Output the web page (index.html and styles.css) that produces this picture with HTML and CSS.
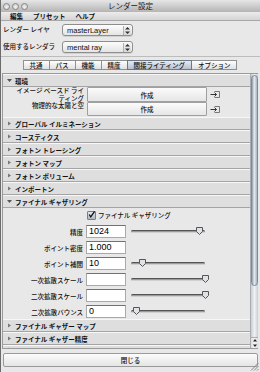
FILE: index.html
```html
<!DOCTYPE html>
<html lang="ja">
<head>
    <meta charset="UTF-8">
    <title>レンダー設定</title>
    <link rel="stylesheet" href="styles.css">
</head>
<body>
<div class="window">
    <div class="titlebar">
        <div class="lights"><span></span><span></span><span></span></div>
        <div class="title">レンダー設定</div>
        <div></div>
    </div>
    <div class="menubar"><span>編集</span><span>プリセット</span><span>ヘルプ</span></div>

    <div class="top">
        <div class="field">
            <label>レンダー レイヤ</label>
            <div class="select">masterLayer
                <svg class="stepper" width="7" height="9" viewBox="0 0 7 9"><path d="M3.5 1L6 3.5H1Z M3.5 8L6 5.5H1Z" fill="#333"/></svg>
            </div>
        </div>
        <div class="field">
            <label>使用するレンダラ</label>
            <div class="select">mental ray
                <svg class="stepper" width="7" height="9" viewBox="0 0 7 9"><path d="M3.5 1L6 3.5H1Z M3.5 8L6 5.5H1Z" fill="#333"/></svg>
            </div>
        </div>
    </div>

    <div class="tabs">
        <span class="tab">共通</span>
        <span class="tab">パス</span>
        <span class="tab">機能</span>
        <span class="tab">精度</span>
        <span class="tab active">間接ライティング</span>
        <span class="tab">オプション</span>
    </div>

    <div class="panel">
        <div class="scroll">
            <div class="hdr"><svg class="tri" width="5" height="5" viewBox="0 0 5 5"><path d="M0 1H5L2.5 4Z" fill="#555"/></svg>環境</div>
            <div class="env">
                <div class="env-row tall">
                    <div class="lbl">イメージ ベースド ライ<br>ティング</div>
                    <div class="btn">作成</div>
                    <svg class="conn" width="10" height="9" viewBox="0 0 10 9"><path d="M4.5 1.5H9.5V7.5H4.5" fill="none" stroke="#777"/><path d="M0.5 4.5H6.5M4.5 2.5L6.5 4.5L4.5 6.5" fill="none" stroke="#333"/></svg>
                </div>
                <div class="env-row">
                    <div class="lbl">物理的な太陽と空</div>
                    <div class="btn">作成</div>
                    <svg class="conn" width="10" height="9" viewBox="0 0 10 9"><path d="M4.5 1.5H9.5V7.5H4.5" fill="none" stroke="#777"/><path d="M0.5 4.5H6.5M4.5 2.5L6.5 4.5L4.5 6.5" fill="none" stroke="#333"/></svg>
                </div>
            </div>
            <div class="hdr"><svg class="tri" width="5" height="5" viewBox="0 0 5 5"><path d="M1 0.5V4.5L4 2.5Z" fill="#777"/></svg>グローバル イルミネーション</div>
            <div class="hdr"><svg class="tri" width="5" height="5" viewBox="0 0 5 5"><path d="M1 0.5V4.5L4 2.5Z" fill="#777"/></svg>コースティクス</div>
            <div class="hdr"><svg class="tri" width="5" height="5" viewBox="0 0 5 5"><path d="M1 0.5V4.5L4 2.5Z" fill="#777"/></svg>フォトン トレーシング</div>
            <div class="hdr"><svg class="tri" width="5" height="5" viewBox="0 0 5 5"><path d="M1 0.5V4.5L4 2.5Z" fill="#777"/></svg>フォトン マップ</div>
            <div class="hdr"><svg class="tri" width="5" height="5" viewBox="0 0 5 5"><path d="M1 0.5V4.5L4 2.5Z" fill="#777"/></svg>フォトン ボリューム</div>
            <div class="hdr"><svg class="tri" width="5" height="5" viewBox="0 0 5 5"><path d="M1 0.5V4.5L4 2.5Z" fill="#777"/></svg>インポートン</div>
            <div class="hdr"><svg class="tri" width="5" height="5" viewBox="0 0 5 5"><path d="M0 1H5L2.5 4Z" fill="#555"/></svg>ファイナル ギャザリング</div>
            <div class="fg">
                <div class="check-row">
                    <span class="checkbox"><svg width="9" height="9" viewBox="0 0 9 9"><path d="M1.5 4.5L3.5 7.5L8.5 0.5" fill="none" stroke="#111" stroke-width="1.6"/></svg></span>
                    <span>ファイナル ギャザリング</span>
                </div>
                <div class="attr">
                    <label>精度</label>
                    <div class="num">1024</div>
                    <div class="slider"><div class="thumb" style="left:92%"><svg width="7" height="8" viewBox="0 0 7 8"><path d="M0.5 0.5H6.5V4.5L3.5 7.5L0.5 4.5Z" fill="#dfe3e8" stroke="#555"/></svg></div></div>
                </div>
                <div class="attr">
                    <label>ポイント密度</label>
                    <div class="num">1.000</div>
                </div>
                <div class="attr">
                    <label>ポイント補間</label>
                    <div class="num">10</div>
                    <div class="slider"><div class="thumb" style="left:16%"><svg width="7" height="8" viewBox="0 0 7 8"><path d="M0.5 0.5H6.5V4.5L3.5 7.5L0.5 4.5Z" fill="#dfe3e8" stroke="#555"/></svg></div></div>
                </div>
                <div class="attr">
                    <label>一次拡散スケール</label>
                    <div class="num"></div>
                    <div class="slider"><div class="thumb" style="left:100%"><svg width="7" height="8" viewBox="0 0 7 8"><path d="M0.5 0.5H6.5V4.5L3.5 7.5L0.5 4.5Z" fill="#dfe3e8" stroke="#555"/></svg></div></div>
                </div>
                <div class="attr">
                    <label>二次拡散スケール</label>
                    <div class="num"></div>
                    <div class="slider"><div class="thumb" style="left:100%"><svg width="7" height="8" viewBox="0 0 7 8"><path d="M0.5 0.5H6.5V4.5L3.5 7.5L0.5 4.5Z" fill="#dfe3e8" stroke="#555"/></svg></div></div>
                </div>
                <div class="attr">
                    <label>二次拡散バウンス</label>
                    <div class="num">0</div>
                    <div class="slider"><div class="thumb" style="left:7%"><svg width="7" height="8" viewBox="0 0 7 8"><path d="M0.5 0.5H6.5V4.5L3.5 7.5L0.5 4.5Z" fill="#dfe3e8" stroke="#555"/></svg></div></div>
                </div>
            </div>
            <div class="hdr"><svg class="tri" width="5" height="5" viewBox="0 0 5 5"><path d="M1 0.5V4.5L4 2.5Z" fill="#777"/></svg>ファイナル ギャザー マップ</div>
            <div class="hdr"><svg class="tri" width="5" height="5" viewBox="0 0 5 5"><path d="M1 0.5V4.5L4 2.5Z" fill="#777"/></svg>ファイナル ギャザー精度</div>
            <div class="hdr"><svg class="tri" width="5" height="5" viewBox="0 0 5 5"><path d="M1 0.5V4.5L4 2.5Z" fill="#777"/></svg>ファイナル ギャザー トレーシング</div>
        </div>
        <div class="scrollbar">
            <div class="vthumb"></div>
            <div class="vtrack"></div>
            <div class="arrows">
                <svg width="6" height="10" viewBox="0 0 6 10"><path d="M3 1L5 3.5H1Z M3 9L5 6.5H1Z" fill="#222"/></svg>
            </div>
        </div>
    </div>

    <div class="bottom">
        <div class="close">閉じる</div>
        <svg class="grip" width="10" height="10" viewBox="0 0 10 10"><path d="M9.5 2L2 9.5M9.5 5L5 9.5M9.5 8L8 9.5" stroke="#888"/></svg>
    </div>
</div>
</body>
</html>
```

FILE: styles.css
```css
* {
    box-sizing: border-box;
}

body {
    margin: 0;
    width: 260px;
    height: 372px;
    overflow: hidden;
    font-family: "Noto Sans CJK JP", sans-serif;
    font-size: 6.5px;
    color: #111;
    background: #5a4038;
}

.window {
    height: 372px;
    display: flex;
    flex-direction: column;
    background: #e8e8e8;
    border-left: 1px solid #6c6c6c;
}

.titlebar {
    height: 12px;
    display: grid;
    grid-template-columns: 1fr auto 1fr;
    align-items: center;
    background: linear-gradient(#e6e6e6, #b4b4b4);
}

.lights {
    display: flex;
    gap: 2px;
    padding-left: 2px;
}

.lights span {
    width: 7px;
    height: 7px;
    border-radius: 50%;
    border: 1px solid #888;
    background: radial-gradient(circle at 50% 65%, #f2f2f2, #c6c6c6);
}

.title {
    font-size: 7.5px;
    line-height: 12px;
    color: #222;
}

.menubar {
    height: 9px;
    display: flex;
    gap: 10px;
    padding-left: 9px;
    font-weight: bold;
    line-height: 8px;
    background: linear-gradient(#ececec, #d4d4d4);
    border-bottom: 1px solid #a8a8a8;
}

.top {
    display: flex;
    flex-direction: column;
    gap: 5px;
    padding: 3px 0 3px 2px;
    border-bottom: 1px solid #bcbcbc;
}

.field {
    display: flex;
    align-items: flex-start;
}

.field label {
    width: 59px;
    line-height: 8px;
    padding-top: 1px;
    font-weight: 500;
}

.select {
    width: 71px;
    height: 12px;
    display: flex;
    justify-content: space-between;
    align-items: center;
    padding: 0 1px 0 4px;
    font-family: "Liberation Sans", sans-serif;
    font-size: 7.5px;
    border: 1px solid #8e8e8e;
    border-radius: 3px;
    background: linear-gradient(#fdfdfd, #e4e4e4);
    box-shadow: 0 1px 0 rgba(0, 0, 0, 0.1);
}

.stepper {
    background: linear-gradient(#f4f4f4, #d8d8d8);
    border-left: 1px solid #b0b0b0;
    width: 8px;
    height: 9px;
}

.tabs {
    display: flex;
    justify-content: center;
    margin-top: 3px;
    height: 10px;
}

.tab {
    padding: 0 6px;
    line-height: 8px;
    font-weight: 500;
    border: 1px solid #909090;
    margin-left: -1px;
    background: linear-gradient(#fefefe, #e0e0e0);
}

.tab.active {
    border-color: #6d7887;
    background: linear-gradient(#e6ebf1, #b6c1ce);
    position: relative;
}

.panel {
    flex: 1;
    display: flex;
    margin: 3px 2px 0 1px;
    border: 1px solid #9a9a9a;
    border-right: none;
    overflow: hidden;
}

.scroll {
    flex: 1;
    overflow: hidden;
    display: flex;
    flex-direction: column;
}

.hdr {
    flex: none;
    height: 13px;
    display: flex;
    align-items: center;
    gap: 3px;
    padding-left: 4px;
    font-weight: bold;
    line-height: 8px;
    background: #dedede;
    border-top: 1px solid #f7f7f7;
    border-bottom: 1px solid #a4a4a4;
}

.hdr:last-child {
    align-items: flex-start;
    padding-top: 1px;
}

.env {
    flex: none;
    padding-bottom: 1px;
}

.env-row {
    display: grid;
    grid-template-columns: 81px 120px 10px;
    gap: 3px;
    height: 14px;
    align-items: start;
}

.env-row.tall {
    height: 15px;
}

.lbl {
    text-align: right;
    line-height: 7.5px;
    font-weight: 500;
}

.btn {
    height: 100%;
    display: flex;
    align-items: center;
    justify-content: center;
    border: 1px solid #a0a0a0;
    border-radius: 1px;
    background: linear-gradient(#fbfbfb, #e6e6e6);
    font-weight: 500;
}

.conn {
    margin-top: 3px;
}

.fg {
    flex: none;
    display: flex;
    flex-direction: column;
    gap: 3px;
    padding-bottom: 1px;
}

.check-row {
    height: 14px;
    display: flex;
    align-items: center;
    gap: 2px;
    padding-left: 84px;
    font-weight: 500;
}

.checkbox {
    width: 9px;
    height: 9px;
    border: 1px solid #7d7d7d;
    border-radius: 1px;
    background: linear-gradient(#e4e8ee, #aeb8c4);
    display: flex;
}

.checkbox svg {
    margin: -2px 0 0 0;
}

.attr {
    height: 13px;
    display: grid;
    grid-template-columns: 81px 40px 78px;
    gap: 2px;
    align-items: center;
}

.attr label {
    text-align: right;
    padding-right: 1px;
    font-weight: 500;
}

.num {
    height: 13px;
    background: #fff;
    border: 1px solid #a8a8a8;
    border-top-color: #727272;
    font-family: "Liberation Sans", sans-serif;
    font-size: 9px;
    line-height: 11px;
    padding-left: 2px;
    color: #000;
}

.slider {
    position: relative;
    height: 3px;
    margin: 0 0 0 3px;
    border-radius: 2px;
    background: #9a9a9a;
    border-top: 1px solid #555;
    border-bottom: 1px solid #d0d0d0;
    width: 74px;
}

.thumb {
    position: absolute;
    top: -4px;
    margin-left: -3.5px;
    width: 7px;
    height: 8px;
    display: flex;
}

.scrollbar {
    width: 8px;
    flex: none;
    display: flex;
    flex-direction: column;
    border-left: 1px solid #a8adb4;
    background: linear-gradient(to right, #c8cdd4, #f0f2f4 50%, #c8cdd4);
}

.vthumb {
    height: 211px;
    margin: 1px 0 0;
    border: 1px solid #7d8998;
    border-radius: 4px;
    background: linear-gradient(to right, #8f9bac, #e6ebf0 45%, #a8b4c3);
}

.vtrack {
    flex: 1;
}

.arrows {
    height: 11px;
    display: flex;
    justify-content: center;
    align-items: center;
    border-top: 1px solid #a8adb4;
    background: linear-gradient(to right, #dcdcdc, #f6f6f6, #dcdcdc);
}

.bottom {
    height: 23px;
    flex: none;
    position: relative;
    padding: 4px 2px 0 2px;
}

.close {
    height: 14px;
    display: flex;
    align-items: center;
    justify-content: center;
    border: 1px solid #9a9a9a;
    border-radius: 2px;
    background: linear-gradient(#fcfcfc, #e4e4e4);
    font-weight: 500;
}

.grip {
    position: absolute;
    right: 1px;
    bottom: 1px;
}
```
